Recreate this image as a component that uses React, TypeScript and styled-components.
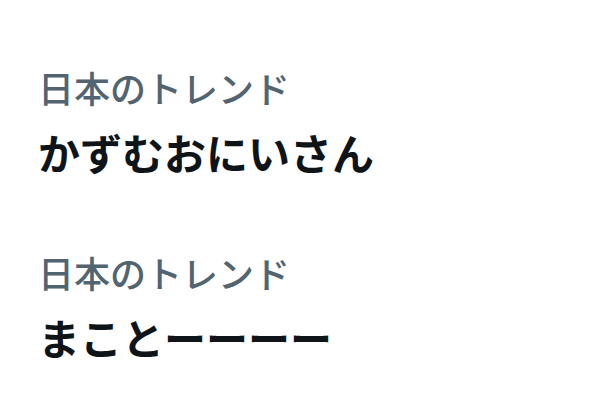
import React from 'react';
import styled, { createGlobalStyle } from 'styled-components';

const GlobalStyle = createGlobalStyle`
  html, body {
    margin: 0;
    padding: 0;
    background: #ffffff;
  }
  body {
    font-family: "Noto Sans CJK JP", "Noto Sans", sans-serif;
  }
`;

const Page = styled.div`
  width: 601px;
  height: 415px;
  box-sizing: border-box;
  padding: 65px 0 0 38px;
  display: flex;
  flex-direction: column;
  gap: 72px;
  background: #ffffff;
  overflow: hidden;
`;

const Trend = styled.div`
  display: flex;
  flex-direction: column;
  gap: 17px;
`;

const Category = styled.div`
  font-size: 36px;
  line-height: 44px;
  font-weight: 500;
  color: #536471;
`;

const Title = styled.div`
  font-size: 42px;
  line-height: 52px;
  font-weight: 700;
  color: #0f1419;
`;

const trends = [
  { category: '日本のトレンド', title: 'かずむおにいさん' },
  { category: '日本のトレンド', title: 'まことーーーー' },
];

export default function App() {
  return (
    <>
      <GlobalStyle />
      <Page>
        {trends.map((t, i) => (
          <Trend key={i}>
            <Category>{t.category}</Category>
            <Title>{t.title}</Title>
          </Trend>
        ))}
      </Page>
    </>
  );
}
